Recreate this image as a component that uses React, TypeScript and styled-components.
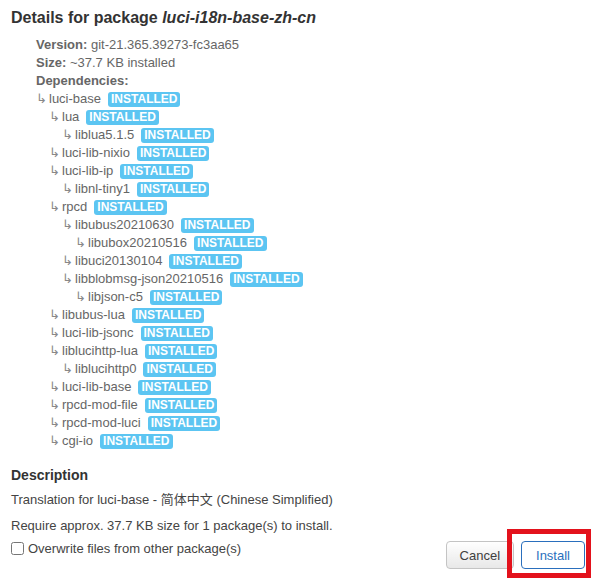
import React from "react";
import styled, { createGlobalStyle } from "styled-components";

const GlobalStyle = createGlobalStyle`
  html, body {
    margin: 0;
    padding: 0;
    background: #fff;
  }
  body {
    font-family: "Liberation Sans", Arial, "Noto Sans CJK SC", sans-serif;
    font-size: 13px;
    color: #404040;
  }
`;

const Page = styled.div`
  padding: 8px 10px 9px 11px;
  display: flex;
  flex-direction: column;
`;

const Title = styled.h4`
  margin: 0;
  font-size: 16px;
  line-height: 20px;
  font-weight: bold;
  color: #333;
`;

const Pkg = styled.em`
  font-style: italic;
`;

const DetailList = styled.ul`
  list-style: none;
  margin: 8px 0 0 25px;
  padding: 0;
  color: #666;
  font-size: 13px;
  line-height: 18px;
`;

const DetailItem = styled.li`
  margin: 0;
  white-space: nowrap;
`;

const Label = styled.strong`
  font-weight: bold;
`;

const DepList = styled.ul`
  list-style: none;
  margin: 0;
  padding: 0;
`;

const DepRow = styled.li<{ $depth: number }>`
  display: flex;
  align-items: center;
  height: 18px;
  padding-left: ${(p) => p.$depth * 13}px;
  white-space: nowrap;
`;

const Arrow = styled.span`
  display: inline-block;
  width: 13px;
  font-family: "DejaVu Sans", sans-serif;
  font-size: 13px;
  line-height: 18px;
  color: #888;
`;

const Badge = styled.span`
  display: inline-block;
  margin-left: 7px;
  padding: 0 3px;
  height: 15px;
  line-height: 15px;
  border-radius: 3px;
  background: #5cc5f2;
  color: #fff;
  font-size: 12px;
  font-weight: bold;
`;

const SectionTitle = styled.h5`
  margin: 16px 0 0 0;
  font-size: 14px;
  line-height: 18px;
  font-weight: bold;
  color: #333;
`;

const Para = styled.p<{ $gap: number }>`
  margin: ${(p) => p.$gap}px 0 0 0;
  font-size: 13px;
  line-height: 18px;
  color: #444;
`;

const Footer = styled.div`
  margin-top: 4px;
  display: flex;
  justify-content: space-between;
  align-items: flex-start;
`;

const CheckLabel = styled.label`
  display: flex;
  align-items: center;
  height: 18px;
  font-size: 13px;
  color: #444;
`;

const Check = styled.input`
  width: 13px;
  height: 13px;
  margin: 0 4px 0 0;
`;

const Buttons = styled.div`
  display: flex;
  gap: 7px;
  margin-top: 2px;
`;

const Button = styled.button<{ $primary?: boolean }>`
  height: 28px;
  padding: 0 ${(p) => (p.$primary ? 14 : 13)}px;
  border-radius: 4px;
  font-family: "Liberation Sans", Arial, sans-serif;
  font-size: 13px;
  cursor: pointer;
  border: 1px solid ${(p) => (p.$primary ? "#2a6fbd" : "#c4c4c4")};
  color: ${(p) => (p.$primary ? "#2a6fbd" : "#404040")};
  background: ${(p) =>
    p.$primary ? "#fff" : "linear-gradient(#ffffff, #e8e8e8)"};
`;

const Highlight = styled.div`
  position: relative;
`;

const RedFrame = styled.div`
  position: absolute;
  left: -14px;
  top: -12px;
  right: -6px;
  bottom: -9px;
  border: 5px solid #e3121c;
  pointer-events: none;
`;

const deps: [string, number][] = [
  ["luci-base", 0],
  ["lua", 1],
  ["liblua5.1.5", 2],
  ["luci-lib-nixio", 1],
  ["luci-lib-ip", 1],
  ["libnl-tiny1", 2],
  ["rpcd", 1],
  ["libubus20210630", 2],
  ["libubox20210516", 3],
  ["libuci20130104", 2],
  ["libblobmsg-json20210516", 2],
  ["libjson-c5", 3],
  ["libubus-lua", 1],
  ["luci-lib-jsonc", 1],
  ["liblucihttp-lua", 1],
  ["liblucihttp0", 2],
  ["luci-lib-base", 1],
  ["rpcd-mod-file", 1],
  ["rpcd-mod-luci", 1],
  ["cgi-io", 1],
];

export default function App() {
  return (
    <>
      <GlobalStyle />
      <Page>
        <Title>
          Details for package <Pkg>luci-i18n-base-zh-cn</Pkg>
        </Title>
        <DetailList>
          <DetailItem>
            <Label>Version:</Label> git-21.365.39273-fc3aa65
          </DetailItem>
          <DetailItem>
            <Label>Size:</Label> ~37.7 KB installed
          </DetailItem>
          <DetailItem>
            <Label>Dependencies:</Label>
            <DepList>
              {deps.map(([name, depth]) => (
                <DepRow key={name} $depth={depth}>
                  <Arrow>↳</Arrow>
                  {name}
                  <Badge>INSTALLED</Badge>
                </DepRow>
              ))}
            </DepList>
          </DetailItem>
        </DetailList>
        <SectionTitle>Description</SectionTitle>
        <Para $gap={7}>Translation for luci-base - 简体中文 (Chinese Simplified)</Para>
        <Para $gap={8}>Require approx. 37.7 KB size for 1 package(s) to install.</Para>
        <Footer>
          <CheckLabel>
            <Check type="checkbox" />
            Overwrite files from other package(s)
          </CheckLabel>
          <Buttons>
            <Button>Cancel</Button>
            <Highlight>
              <Button $primary>Install</Button>
              <RedFrame />
            </Highlight>
          </Buttons>
        </Footer>
      </Page>
    </>
  );
}
